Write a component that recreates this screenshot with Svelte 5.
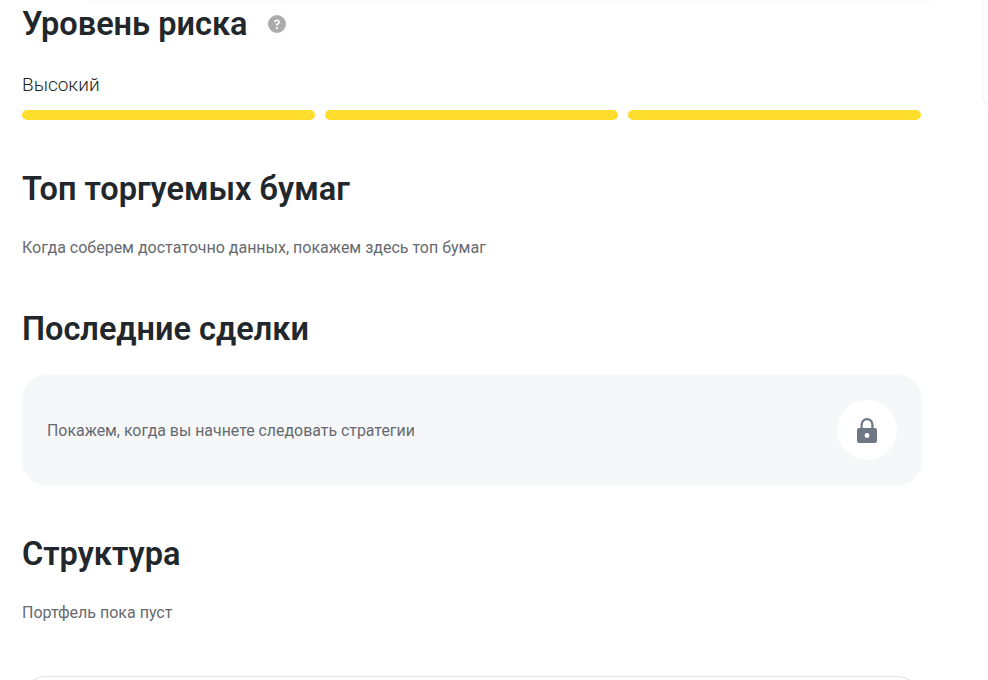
<script>
  const segments = [0, 1, 2];
</script>

<div class="page">
  <div class="top-shade"></div>
  <main class="main">
    <section class="risk">
      <div class="title-row">
        <h2>Уровень риска</h2>
        <svg class="help" viewBox="0 0 18 18" width="18" height="18" aria-hidden="true">
          <circle cx="9" cy="9" r="9" fill="#ababab" />
          <path d="M6.2 7.2c0-1.7 1.2-2.7 2.9-2.7 1.6 0 2.8 1 2.8 2.4 0 1.2-.7 1.8-1.5 2.3-.6.4-.9.7-.9 1.3v.3H8v-.5c0-1 .5-1.5 1.2-2 .6-.4 1-.7 1-1.3 0-.6-.5-1-1.1-1-.7 0-1.2.5-1.2 1.2H6.2z" fill="#fff" />
          <circle cx="8.9" cy="13.1" r="1.1" fill="#fff" />
        </svg>
      </div>
      <div class="level">Высокий</div>
      <div class="bars">
        {#each segments as s (s)}
          <div class="bar"></div>
        {/each}
      </div>
    </section>

    <section class="top">
      <h2>Топ торгуемых бумаг</h2>
      <p class="note">Когда соберем достаточно данных, покажем здесь топ бумаг</p>
    </section>

    <section class="deals">
      <h2>Последние сделки</h2>
      <div class="locked">
        <span class="locked-text">Покажем, когда вы начнете следовать стратегии</span>
        <div class="lock-circle">
          <svg viewBox="0 0 20 25" width="20" height="25" aria-hidden="true">
            <path d="M4.6 11V6.6a5.4 5.4 0 0 1 10.8 0V11" fill="none" stroke="#6f7684" stroke-width="2.2" />
            <rect x="0" y="10" width="20" height="15" rx="2.2" fill="#6f7684" />
            <circle cx="10" cy="17.5" r="2.4" fill="#fff" />
          </svg>
        </div>
      </div>
    </section>

    <section class="structure">
      <h2>Структура</h2>
      <p class="note">Портфель пока пуст</p>
      <div class="empty-card"></div>
    </section>
  </main>
  <aside class="side"></aside>
</div>

<style>
  :global(body) {
    margin: 0;
    background: #fff;
    overflow: hidden;
  }
  .page {
    position: relative;
    display: flex;
    height: 680px;
    overflow: hidden;
    font-family: Roboto, "Liberation Sans", sans-serif;
    color: #222;
  }
  .top-shade {
    position: absolute;
    top: 0;
    left: 90px;
    width: 840px;
    height: 5px;
    background: linear-gradient(#fafafa, #fff);
  }
  .main {
    position: relative;
    flex: none;
    width: 899px;
    margin-left: 22px;
  }
  .side {
    flex: none;
    width: 200px;
    height: 160px;
    margin: -44px 0 0 61px;
    border: 1px solid #f1f1f6;
    border-radius: 24px;
    box-sizing: border-box;
  }
  h2 {
    margin: 0;
    font-size: 32.5px;
    line-height: 40px;
    font-weight: 600;
    color: #22272b;
  }
  .title-row {
    display: flex;
    align-items: center;
    gap: 20px;
    margin-top: 4px;
  }
  .help {
    flex: none;
  }
  .level {
    margin-top: 29px;
    font-size: 19px;
    line-height: 24px;
    font-weight: 300;
    color: #222;
  }
  .bars {
    display: grid;
    grid-template-columns: repeat(3, 1fr);
    gap: 10px;
    margin-top: 13px;
  }
  .bar {
    height: 10px;
    border-radius: 5px;
    background: #ffdd2d;
  }
  .top {
    margin-top: 49px;
  }
  .note {
    margin: 28px 0 0;
    font-size: 16px;
    line-height: 22px;
    color: #666a70;
  }
  .deals {
    margin-top: 50px;
  }
  .locked {
    display: flex;
    align-items: center;
    justify-content: space-between;
    box-sizing: border-box;
    height: 110px;
    width: 900px;
    margin-top: 26px;
    padding: 0 25px;
    border-radius: 24px;
    background: #f6f7f8;
  }
  .locked-text {
    padding-top: 2px;
    font-size: 15.9px;
    line-height: 22px;
    color: #666a70;
  }
  .lock-circle {
    display: flex;
    align-items: center;
    justify-content: center;
    width: 60px;
    height: 60px;
    border-radius: 50%;
    background: #fff;
  }
  .structure {
    margin-top: 49px;
  }
  .structure .note {
    margin-top: 28px;
  }
  .empty-card {
    height: 100px;
    margin: 52px 0 0 0;
    border: 1px solid #e2e2e2;
    border-radius: 24px;
  }
</style>
